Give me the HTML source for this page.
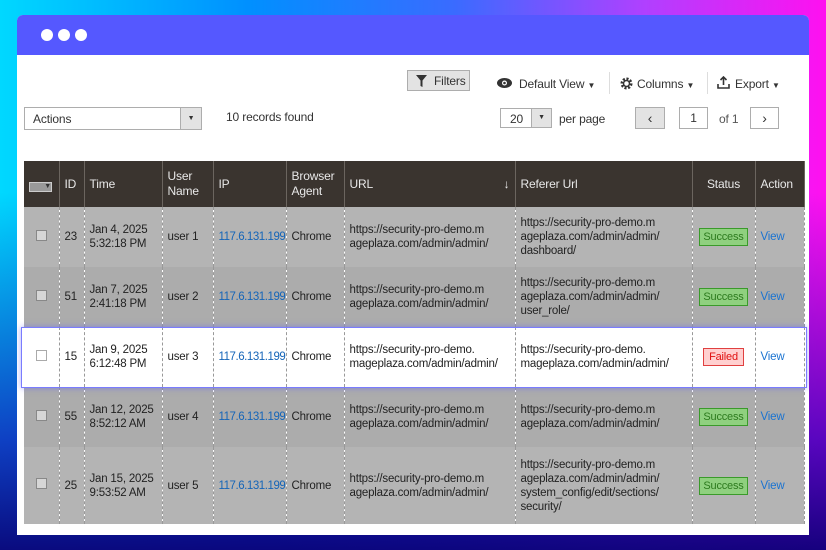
<!DOCTYPE html>
<html><head><meta charset="utf-8"><style>
*{box-sizing:border-box;margin:0;padding:0}
body{width:826px;height:550px;overflow:hidden;font-family:"Liberation Sans",sans-serif;font-size:12px;letter-spacing:-0.15px;color:#333;
background:linear-gradient(90deg,#00d8ff 0%,#0090ff 30%,#3a6bff 55%,#b040ff 78%,#ff10f0 100%);position:relative}
.bgb{position:absolute;left:0;right:0;top:0;bottom:0;background:linear-gradient(180deg,rgba(0,0,0,0) 0%,rgba(0,0,0,0) 35%,rgba(20,0,170,.7) 80%,rgba(10,0,120,.95) 100%)}
.win{position:absolute;left:17px;top:15px;width:792px;height:520px;background:#fff;border-radius:6px 6px 0 0;overflow:hidden}
.bar{height:40px;background:#5558ff;position:relative}
.dot{position:absolute;top:14px;width:12px;height:12px;border-radius:50%;background:#fff}
.abs{position:absolute;white-space:nowrap}
.btn{border:1px solid #adadad;background:#e3e3e3}
table{position:absolute;left:7px;top:146px;width:780px;border-collapse:collapse;table-layout:fixed}
th{background:#3a342f;color:#e8e8e8;font-weight:normal;text-align:left;padding:0 5px;height:46px;border-right:1px solid #6b655f;font-size:12px;line-height:15px}
td{padding:0 5px;border-right:1px dashed #999;font-size:11.5px;letter-spacing:-0.2px;line-height:14px;color:#222;vertical-align:middle;overflow:hidden}
tr.a td{background:#b4b4b4}tr.b td{background:#acacac}
tr.h td{background:#fff}
.nw{white-space:nowrap}
.ip{color:#1565b8;white-space:nowrap;letter-spacing:-0.45px}.v{color:#1a73d0}
.cb{display:inline-block;width:11px;height:11px;border:1px solid #888;background:#d6d6d6}
tr.h .cb{background:#fff;border-color:#aaa}
.ok{display:inline-block;border:1px solid #3a9a2a;background:#8fd07f;color:#2d7a1e;padding:1px 3px;font-size:11px}
.bad{display:inline-block;border:1px solid #e04040;background:#ffd0d0;color:#e01010;padding:1px 5px;font-size:11px}
</style></head><body><div class="bgb"></div>
<div class="win">
<div class="bar"><div class="dot" style="left:24px"></div><div class="dot" style="left:41px"></div><div class="dot" style="left:58px"></div></div>
<div class="abs btn" style="left:390px;top:55px;width:63px;height:21px"><svg class="abs" style="left:8px;top:4px" width="11" height="12"><path d="M0 0H11L6.5 5.5V12L4.5 11V5.5Z" fill="#333"/></svg><span class="abs" style="left:26px;top:3px">Filters</span></div>
<svg class="abs" style="left:480px;top:63px" width="15" height="10"><ellipse cx="7.5" cy="5" rx="7.5" ry="5" fill="#333"/><circle cx="7.5" cy="5" r="2.5" fill="#fff"/><circle cx="7.5" cy="5" r="1.3" fill="#333"/></svg>
<span class="abs" style="left:502px;top:62px">Default View <span style="font-size:8px">▼</span></span>
<div class="abs" style="left:592px;top:57px;width:1px;height:22px;background:#ddd"></div>
<svg class="abs" style="left:603px;top:62px" width="13" height="13" viewBox="0 0 13 13"><circle cx="6.5" cy="6.5" r="4.5" fill="none" stroke="#333" stroke-width="3" stroke-dasharray="2 1.5"/><circle cx="6.5" cy="6.5" r="3" fill="none" stroke="#333" stroke-width="1.5"/></svg>
<span class="abs" style="left:620px;top:62px">Columns <span style="font-size:8px">▼</span></span>
<div class="abs" style="left:690px;top:57px;width:1px;height:22px;background:#ddd"></div>
<svg class="abs" style="left:700px;top:61px" width="13" height="14"><path d="M6.5 1V9M3.5 4L6.5 1L9.5 4M1 8V12H12V8" fill="none" stroke="#333" stroke-width="1.6"/></svg>
<span class="abs" style="left:718px;top:62px">Export <span style="font-size:8px">▼</span></span>
<div class="abs" style="left:7px;top:92px;width:178px;height:23px;border:1px solid #adadad"><span class="abs" style="left:8px;top:4px">Actions</span><div class="abs" style="right:0;top:0;width:21px;height:21px;background:#e3e3e3;border-left:1px solid #adadad;font-size:7px;text-align:center;line-height:21px">▼</div></div>
<span class="abs" style="left:209px;top:95px">10 records found</span>
<div class="abs" style="left:483px;top:93px;width:52px;height:20px;border:1px solid #adadad"><span class="abs" style="left:9px;top:3px">20</span><div class="abs" style="right:0;top:0;width:20px;height:18px;background:#e3e3e3;border-left:1px solid #adadad;font-size:7px;text-align:center;line-height:18px">▼</div></div>
<span class="abs" style="left:542px;top:97px">per page</span>
<div class="abs btn" style="left:618px;top:92px;width:30px;height:22px;text-align:center;line-height:20px;font-size:14px">&#8249;</div>
<div class="abs" style="left:662px;top:92px;width:29px;height:22px;border:1px solid #adadad;text-align:center;line-height:20px">1</div>
<span class="abs" style="left:702px;top:97px;color:#555">of 1</span>
<div class="abs" style="left:733px;top:92px;width:29px;height:22px;border:1px solid #adadad;text-align:center;line-height:20px;font-size:14px">&#8250;</div>
<table>
<colgroup><col style="width:35px"><col style="width:25px"><col style="width:78px"><col style="width:51px"><col style="width:73px"><col style="width:58px"><col style="width:171px"><col style="width:177px"><col style="width:63px"><col style="width:49px"></colgroup>
<tr><th><span style="display:inline-block;width:23px;height:10px;background:#999;border:1px solid #ccc;font-size:7px;text-align:right;color:#333;line-height:8px">▼</span></th><th>ID</th><th>Time</th><th>User Name</th><th>IP</th><th>Browser Agent</th><th>URL<span style="float:right">↓</span></th><th>Referer Url</th><th style="text-align:center">Status</th><th>Action</th></tr>
<tr class="a" style="height:60px"><td style="text-align:center"><span class="cb"></span></td><td>23</td><td class="nw">Jan 4, 2025<br>5:32:18 PM</td><td>user 1</td><td class="ip">117.6.131.199</td><td>Chrome</td><td>https://security-pro-demo.m ageplaza.com/admin/admin/</td><td>https://security-pro-demo.m ageplaza.com/admin/admin/ dashboard/</td><td style="text-align:center"><span class="ok">Success</span></td><td class="v">View</td></tr>
<tr class="b" style="height:60px"><td style="text-align:center"><span class="cb"></span></td><td>51</td><td class="nw">Jan 7, 2025<br>2:41:18 PM</td><td>user 2</td><td class="ip">117.6.131.199</td><td>Chrome</td><td>https://security-pro-demo.m ageplaza.com/admin/admin/</td><td>https://security-pro-demo.m ageplaza.com/admin/admin/ user_role/</td><td style="text-align:center"><span class="ok">Success</span></td><td class="v">View</td></tr>
<tr class="h" style="height:60px"><td style="text-align:center"><span class="cb"></span></td><td>15</td><td class="nw">Jan 9, 2025<br>6:12:48 PM</td><td>user 3</td><td class="ip">117.6.131.199</td><td>Chrome</td><td>https://security-pro-demo. mageplaza.com/admin/admin/</td><td>https://security-pro-demo. mageplaza.com/admin/admin/</td><td style="text-align:center"><span class="bad">Failed</span></td><td class="v">View</td></tr>
<tr class="b" style="height:60px"><td style="text-align:center"><span class="cb"></span></td><td>55</td><td class="nw">Jan 12, 2025<br>8:52:12 AM</td><td>user 4</td><td class="ip">117.6.131.199</td><td>Chrome</td><td>https://security-pro-demo.m ageplaza.com/admin/admin/</td><td>https://security-pro-demo.m ageplaza.com/admin/admin/</td><td style="text-align:center"><span class="ok">Success</span></td><td class="v">View</td></tr>
<tr class="a" style="height:77px"><td style="text-align:center"><span class="cb"></span></td><td>25</td><td class="nw">Jan 15, 2025<br>9:53:52 AM</td><td>user 5</td><td class="ip">117.6.131.199</td><td>Chrome</td><td>https://security-pro-demo.m ageplaza.com/admin/admin/</td><td>https://security-pro-demo.m ageplaza.com/admin/admin/ system_config/edit/sections/ security/</td><td style="text-align:center"><span class="ok">Success</span></td><td class="v">View</td></tr>
</table>
<div class="abs" style="left:4px;top:312px;width:786px;height:61px;border:1.5px solid #7a7cff;box-shadow:0 0 6px rgba(85,88,255,.5);pointer-events:none"></div>
</div>
</body></html>
